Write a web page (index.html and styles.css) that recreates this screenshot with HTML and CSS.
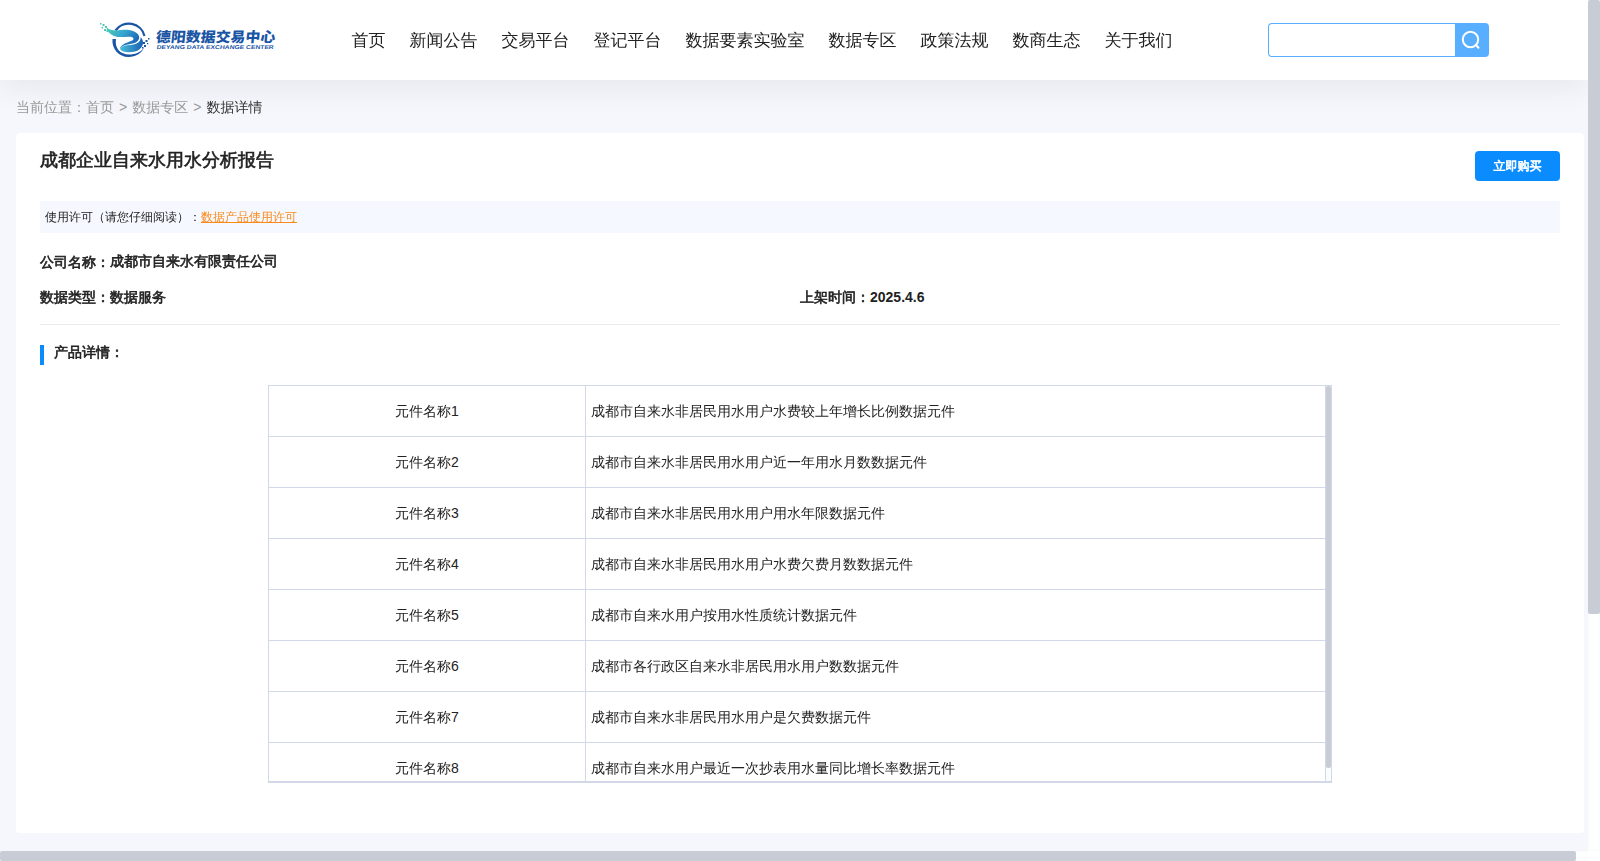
FILE: index.html
```html
<!DOCTYPE html>
<html lang="zh-CN">
<head>
<meta charset="utf-8">
<title>数据详情</title>
<link rel="stylesheet" href="styles.css">
</head>
<body>
<div class="window">
  <div class="viewport">
    <header class="header">
      <svg class="logo" width="180" height="40" viewBox="0 0 180 40">
        <defs>
          <linearGradient id="wave" x1="0" y1="0" x2="1" y2="0.6">
            <stop offset="0" stop-color="#4fd0b4"/>
            <stop offset="0.5" stop-color="#35a6cf"/>
            <stop offset="1" stop-color="#1b62b5"/>
          </linearGradient>
          <linearGradient id="tail" x1="0" y1="0" x2="1" y2="0">
            <stop offset="0" stop-color="#45bfd8"/>
            <stop offset="1" stop-color="#1a5fb4"/>
          </linearGradient>
        </defs>
        <path d="M15.500 10.500A16.200 16.200 0 0 1 44.500 16" fill="none" stroke="#1a55a5" stroke-width="2.200"/>
        <path d="M12.500 19C11.500 29 19 37 28.500 37C36 37 41 33.500 44 28C40 32.500 35 34.500 29 34.500C20 34.500 14.500 28 16 19Z" fill="#1a55a5"/>
        <path d="M6 7C13 13 20 9 29 10C39 11.500 42 18 36.500 22C32 25 24 23 20 29C21 22 34 22 33.500 18.500C32 14.500 22 19 14 16C10 14.500 7 11 6 7Z" fill="url(#wave)"/>
        <path d="M20 29C24 23.500 31 26 36.500 23.500C40 22 41 19 40.500 17C46 22 42 30 35 31.500C29 33 22 32.500 20 29Z" fill="url(#tail)"/>
        <path d="M0 3h1.500v1.500H0zM2.500 4h2v2h-2zM5 6h2v2H5zM1.500 7h1.500v1.500H1.500zM4 9h2v2H4zM6.500 10h2v2h-2z" fill="#4fc9b2"/>
        <path d="M43 22h2v2h-2zM45.500 20h2v2h-2zM48 18h1.500v1.500H48zM44 25h2v2h-2zM42 27h1.500v1.500H42zM47 23h1.300v1.300H47z" fill="#1a55a5"/>
        <text class="logo-cn" transform="translate(55.500 22.100) skewX(-6) scale(1.060 1)" textLength="112.500">德阳数据交易中心</text>
        <text class="logo-en" transform="translate(56.500 28.700) skewX(-8)" textLength="117" lengthAdjust="spacingAndGlyphs">DEYANG DATA EXCHANGE CENTER</text>
      </svg>
      <nav class="nav">
        <a>首页</a><a>新闻公告</a><a>交易平台</a><a>登记平台</a><a>数据要素实验室</a><a>数据专区</a><a>政策法规</a><a>数商生态</a><a>关于我们</a>
      </nav>
      <div class="search">
        <div class="search-input"></div>
        <div class="search-btn">
          <svg width="20" height="20" viewBox="0 0 20 20" fill="none" stroke="#fff" stroke-width="2" stroke-linecap="round">
            <circle cx="9.500" cy="9.500" r="7.700"/><path d="M15 15l2.500 2.700"/>
          </svg>
        </div>
      </div>
    </header>

    <div class="crumbs"><span>当前位置：首页</span><span>&gt;</span><span>数据专区</span><span>&gt;</span><span class="current">数据详情</span></div>

    <main class="card">
      <div class="title-row">
        <h1 class="title">成都企业自来水用水分析报告</h1>
        <button class="buy">立即购买</button>
      </div>
      <div class="license">使用许可（请您仔细阅读）：<a class="license-link">数据产品使用许可</a></div>
      <div class="info">
        <div class="field"><span>公司名称：</span><span class="company">成都市自来水有限责任公司</span></div>
        <div class="field field-left">数据类型：数据服务</div>
        <div class="field">上架时间：<span class="date">2025.4.6</span></div>
      </div>
      <div class="section"><i class="mark"></i><h2 class="section-title">产品详情：</h2></div>
      <div class="table-box">
        <div class="rows">
          <div class="row"><div class="name">元件名称1</div><div class="desc">成都市自来水非居民用水用户水费较上年增长比例数据元件</div></div>
          <div class="row"><div class="name">元件名称2</div><div class="desc">成都市自来水非居民用水用户近一年用水月数数据元件</div></div>
          <div class="row"><div class="name">元件名称3</div><div class="desc">成都市自来水非居民用水用户用水年限数据元件</div></div>
          <div class="row"><div class="name">元件名称4</div><div class="desc">成都市自来水非居民用水用户水费欠费月数数据元件</div></div>
          <div class="row"><div class="name">元件名称5</div><div class="desc">成都市自来水用户按用水性质统计数据元件</div></div>
          <div class="row"><div class="name">元件名称6</div><div class="desc">成都市各行政区自来水非居民用水用户数数据元件</div></div>
          <div class="row"><div class="name">元件名称7</div><div class="desc">成都市自来水非居民用水用户是欠费数据元件</div></div>
          <div class="row"><div class="name">元件名称8</div><div class="desc">成都市自来水用户最近一次抄表用水量同比增长率数据元件</div></div>
        </div>
        <div class="table-scroll"><div class="table-thumb"></div></div>
      </div>
    </main>
  </div>
  <div class="vscroll"><div class="vthumb"></div></div>
  <div class="hscroll"><div class="hthumb"></div></div>
  <div class="corner"></div>
</div>
</body>
</html>
```
FILE: styles.css
```css
* { box-sizing: border-box; }
body {
  margin: 0;
  overflow: hidden;
  font: 14px/20px "Liberation Sans", "Droid Sans Fallback", "WenQuanYi Micro Hei", "WenQuanYi Zen Hei", "Noto Sans CJK SC", sans-serif;
  color: #222;
}
h1, h2 { margin: 0; }
/* the CJK face has a single weight, so the strokes are thickened */
.title, .buy, .info, .section-title { font-weight: bold; -webkit-text-stroke: .6px currentColor; }
.window {
  display: grid;
  grid-template: 851px 10px / 1588px 12px;
  width: 1600px;
  height: 861px;
}
.viewport { background: #f5f7fc; overflow: hidden; }

/* header */
.header {
  display: flex;
  align-items: center;
  height: 80px;
  padding-left: 100px;
  background: #fff;
  box-shadow: 0 10px 30px rgba(0, 0, 0, .06);
}
.logo { flex: none; }
.logo-cn { font: 900 14px "Noto Sans CJK SC", sans-serif; fill: #1a55a5; }
.logo-en { font: bold 5.6px "Liberation Sans", sans-serif; fill: #1a55a5; }
.nav {
  display: flex;
  gap: 24px;
  width: 916.500px;
  margin-left: 71.500px;
  padding-top: 2px;
  font-size: 17px;
  line-height: 24px;
  white-space: nowrap;
}
.search { display: flex; width: 221px; height: 34px; }
.search-input { flex: 1; border: 1px solid #58aeff; border-right: 0; border-radius: 4px 0 0 4px; }
.search-btn {
  display: flex;
  width: 34px;
  padding: 7px 0 0 6px;
  background: #58aeff;
  border-radius: 0 4px 4px 0;
}

/* breadcrumbs */
.crumbs { display: flex; gap: 5px; padding: 17px 16px 16px; color: #999; }
.current { color: #333; }

/* detail card */
.card { width: 1568px; height: 700px; margin-left: 16px; padding: 18px 24px 0; background: #fff; border-radius: 4px; }
.title-row { display: flex; justify-content: space-between; height: 50px; }
.title { font-size: 18px; line-height: 18px; }
.buy {
  width: 85px;
  height: 30px;
  padding: 0;
  border: 0;
  border-radius: 4px;
  background: #0a8cff;
  color: #fff;
  font-family: inherit;
  font-size: 12px;
}
.license { height: 32px; padding-left: 5px; background: #f5f9ff; font-size: 12px; line-height: 32px; }
.license-link { color: #fa8919; text-decoration: underline; }
.info {
  display: flex;
  flex-wrap: wrap;
  align-content: flex-start;
  height: 92px;
  padding-top: 19px;
  border-bottom: 1px solid #ebebeb;
}
.field { display: flex; height: 35px; line-height: 20px; }
.field:first-child { width: 100%; }
.field-left { width: 50%; }
.company { margin-top: -1px; }
.date { -webkit-text-stroke: 0; }
.section { display: flex; gap: 10px; height: 60px; padding-top: 20px; }
.mark { width: 4px; height: 20px; background: #0a8cff; }
.section-title { margin-top: -3px; font-size: 14px; line-height: 20px; }

/* component table */
.table-box {
  display: flex;
  width: 1064px;
  height: 398px;
  margin-left: 228px;
  border: 1px solid #d3d8e8;
  border-bottom-width: 2px;
}
.rows { width: 1058px; overflow: hidden; border-right: 1px solid #d3d8e8; }
.row { display: flex; height: 51px; border-bottom: 1px solid #d3d8e8; line-height: 50px; }
.name { width: 317px; border-right: 1px solid #d3d8e8; text-align: center; }
.desc { padding-left: 5px; }
.table-scroll { width: 5px; background: #f9fdfd; }
.table-thumb { height: 382px; border-radius: 2px; background: #c8ccd4; }

/* window scrollbars */
.vscroll, .hscroll { background: #fdfefe; box-shadow: inset 0 0 5px rgba(0, 40, 40, .02); }
.vthumb { height: 614px; border-radius: 2px; background: #c8ccd4; }
.hthumb { width: 1576px; height: 10px; border-radius: 2px; background: #c8ccd4; }
.corner { background: #fff; }
```
